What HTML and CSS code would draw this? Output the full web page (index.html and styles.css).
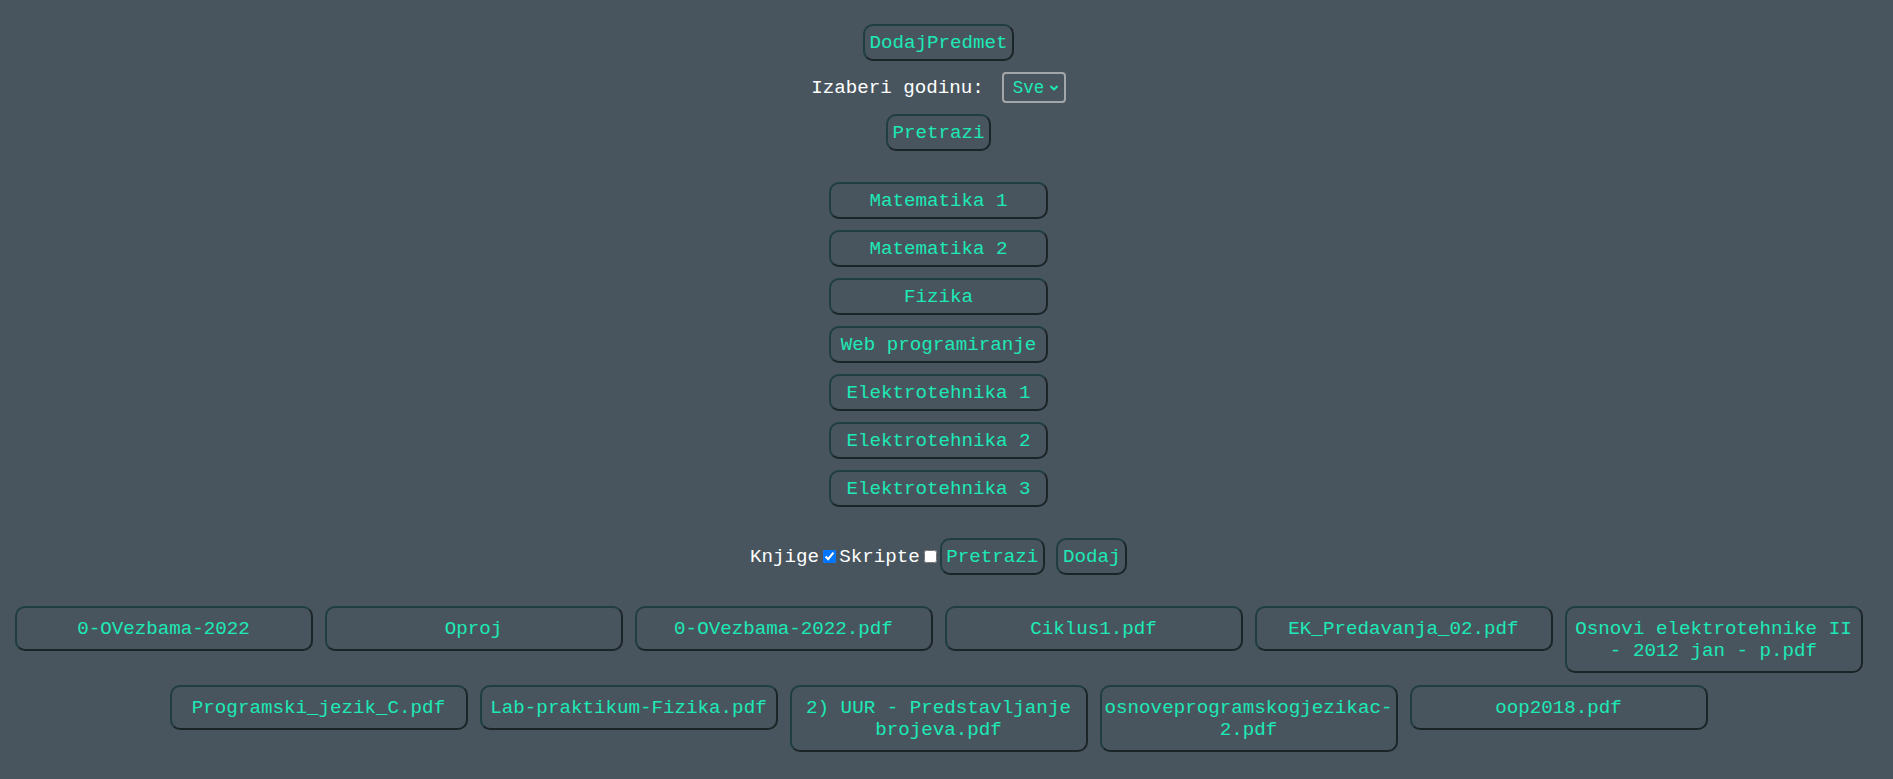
FILE: index.html
```html
<!DOCTYPE html>
<html lang="sr">
<head>
<meta charset="utf-8">
<title>Predmeti</title>
<link rel="stylesheet" href="styles.css">
</head>
<body>
<main class="page">
  <section class="top">
    <button class="btn">DodajPredmet</button>
    <div class="year-row">
      <label class="label" for="god">Izaberi godinu:</label>
      <div class="select-wrap">
        <select id="god" class="select">
          <option>Sve</option>
          <option>1</option>
          <option>2</option>
          <option>3</option>
          <option>4</option>
        </select>
        <svg class="chev" width="8" height="6" viewBox="0 0 8 6" aria-hidden="true"><path d="M1 1.5 L4 4.5 L7 1.5" fill="none" stroke="#1de9b6" stroke-width="2" stroke-linecap="round" stroke-linejoin="round"/></svg>
      </div>
    </div>
    <button class="btn">Pretrazi</button>
  </section>

  <section class="subjects">
    <button class="btn subject">Matematika 1</button>
    <button class="btn subject">Matematika 2</button>
    <button class="btn subject">Fizika</button>
    <button class="btn subject">Web programiranje</button>
    <button class="btn subject">Elektrotehnika 1</button>
    <button class="btn subject">Elektrotehnika 2</button>
    <button class="btn subject">Elektrotehnika 3</button>
  </section>

  <div class="filter-row">
    <span class="label">Knjige</span><input type="checkbox" class="check" checked><span class="label">Skripte</span><input type="checkbox" class="check"><button class="btn">Pretrazi</button><button class="btn dodaj">Dodaj</button>
  </div>

  <section class="files">
    <button class="btn file">0-OVezbama-2022</button>
    <button class="btn file">Oproj</button>
    <button class="btn file">0-OVezbama-2022.pdf</button>
    <button class="btn file">Ciklus1.pdf</button>
    <button class="btn file">EK_Predavanja_02.pdf</button>
    <button class="btn file">Osnovi elektrotehnike II - 2012 jan - p.pdf</button>
    <button class="btn file">Programski_jezik_C.pdf</button>
    <button class="btn file">Lab-praktikum-Fizika.pdf</button>
    <button class="btn file">2) UUR - Predstavljanje brojeva.pdf</button>
    <button class="btn file">osnoveprogramskogjezikac-2.pdf</button>
    <button class="btn file">oop2018.pdf</button>
  </section>
</main>
</body>
</html>
```

FILE: styles.css
```css
html, body {
  margin: 0;
  padding: 0;
  background: #48555e;
}

body {
  font-family: "Courier New", "Liberation Mono", monospace;
  font-size: 19.2px;
  line-height: 22px;
  color: #ffffff;
}

.page {
  width: 1877px;
  padding-top: 24px;
  display: flex;
  flex-direction: column;
  align-items: center;
}

.btn {
  font-family: "Courier New", "Liberation Mono", monospace;
  font-size: 19.2px;
  line-height: 22px;
  color: #1de9b6;
  background: transparent;
  border: 2px solid;
  border-color: #1f3e40 #1b2528 #1b2528 #1f3e40;
  border-radius: 10px;
  padding: 5.5px 4.5px;
  margin: 0;
  cursor: pointer;
  box-sizing: border-box;
}

.top {
  display: flex;
  flex-direction: column;
  align-items: center;
  gap: 11px;
}

.year-row {
  display: flex;
  align-items: center;
  height: 31px;
}

.label {
  color: #ffffff;
  white-space: pre;
}

.select-wrap {
  position: relative;
  margin-left: 18px;
  width: 64px;
  height: 31px;
}

.select {
  appearance: none;
  -webkit-appearance: none;
  width: 64px;
  height: 31px;
  box-sizing: border-box;
  border: 2px solid #a3a6a8;
  border-radius: 4px;
  background: transparent;
  color: #1de9b6;
  font-family: "Courier New", "Liberation Mono", monospace;
  font-size: 17.5px;
  padding: 0 0 0 9px;
  margin: 0;
}

.select option {
  background: #48555e;
}

.chev {
  position: absolute;
  right: 8px;
  top: 13px;
  pointer-events: none;
}

.subjects {
  margin-top: 31px;
  display: flex;
  flex-direction: column;
  align-items: center;
  gap: 11px;
}

.subject {
  width: 219px;
  padding: 5.5px 4px;
}

.filter-row {
  margin-top: 31px;
  display: flex;
  align-items: center;
  height: 37px;
}

.check {
  width: 13px;
  height: 13px;
  margin: 3px 3px 3px 4px;
}

.dodaj {
  margin-left: 11.5px;
}

.files {
  margin-top: 31px;
  width: 1877px;
  display: flex;
  flex-wrap: wrap;
  justify-content: center;
  align-items: flex-start;
  column-gap: 12px;
  row-gap: 12px;
}

.file {
  width: 298px;
  padding: 9.5px 2px;
}
```
